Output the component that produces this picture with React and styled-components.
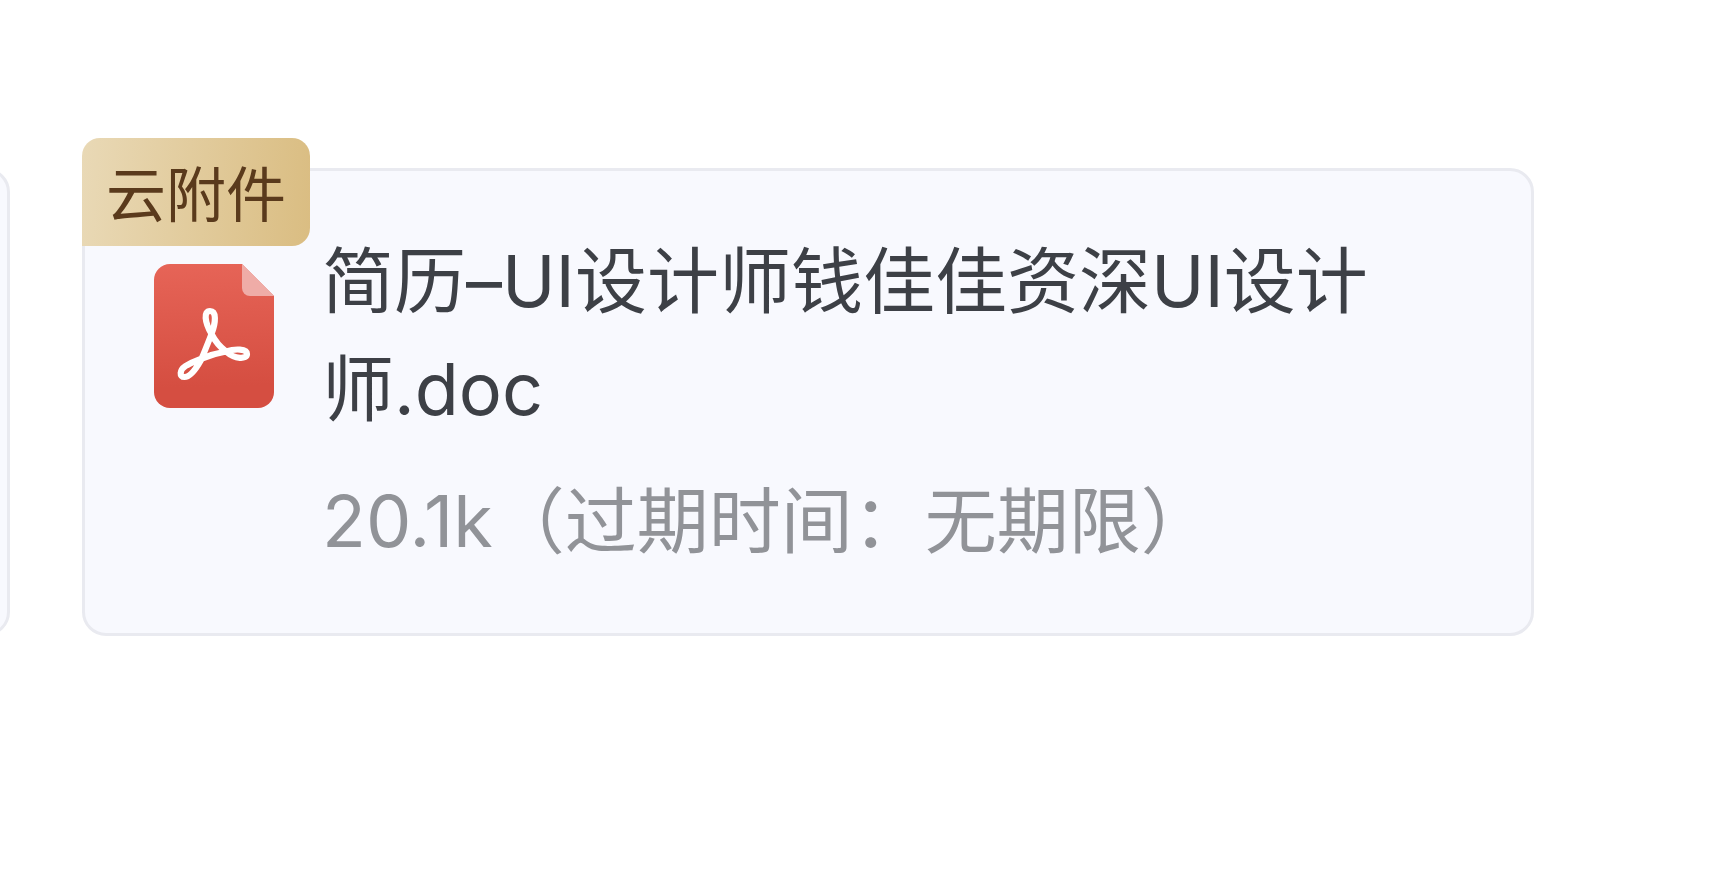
import React from 'react';
import styled, { createGlobalStyle } from 'styled-components';

const GlobalStyle = createGlobalStyle`
  * {
    box-sizing: border-box;
  }

  body {
    margin: 0;
    background: #ffffff;
    font-family: Inter, 'Noto Sans CJK SC', sans-serif;
    font-weight: 400;
  }
`;

const AttachmentStrip = styled.ul`
  display: flex;
  justify-content: flex-end;
  gap: 72px;
  margin: 0;
  padding: 168px 192px 48px 82px;
  list-style: none;
  overflow: hidden;
`;

const Card = styled.li`
  position: relative;
  flex: 0 0 100%;
  display: flex;
  align-items: flex-start;
  gap: 48px;
  padding: 56px 117px 58px 69px;
  border: 3px solid #e9eaf0;
  border-radius: 24px;
  background: #f8f9fe;
`;

const CloudBadge = styled.span`
  position: absolute;
  top: -33px;
  left: -3px;
  padding: 12px 24px 6px;
  border-radius: 18px 18px 18px 0;
  background: linear-gradient(94deg, #e9d9b6 0%, #dabd82 100%);
  color: #5a3a1c;
  font-size: 60px;
  line-height: 90px;
  white-space: nowrap;
`;

const FileIcon = styled.svg`
  flex: none;
  width: 120px;
  height: 144px;
  margin-top: 37px;
`;

const FileInfo = styled.div`
  flex: 1;
  min-width: 0;
  display: flex;
  flex-direction: column;
  gap: 24px;
  font-size: 72px;
  line-height: 108px;
`;

const FileName = styled.div`
  color: #3d4046;
`;

const FileMeta = styled.div`
  color: #919398;
`;

const PdfIcon = () => (
  <FileIcon viewBox="0 0 120 144" fill="none" aria-hidden="true">
    <defs>
      <linearGradient id="pdf-body" x1="58" y1="0" x2="62" y2="144" gradientUnits="userSpaceOnUse">
        <stop offset="0" stopColor="#e66457" />
        <stop offset="0.85" stopColor="#d54e41" />
      </linearGradient>
    </defs>
    <path
      d="M16 0H88L120 32V128A16 16 0 0 1 104 144H16A16 16 0 0 1 0 128V16A16 16 0 0 1 16 0Z"
      fill="url(#pdf-body)"
    />
    <path d="M88 0L120 32H96A8 8 0 0 1 88 24Z" fill="#efaca7" />
    <path
      d="M57.500 70C50.500 58 49.500 47 56 47C62.500 47 62 58 57.500 70C54 79 50.500 88 47 96C42 105 36 113 30.500 113C25 113 25.500 106 31.500 102C37 98.500 42 97 47 95C55 91.500 63 89 72 87.500C81 84.500 93 84.500 93 90C93 95.500 81 95.500 72 87.500C66 83 61 77 57.500 70Z"
      stroke="#ffffff"
      strokeWidth="6.2"
      strokeLinejoin="round"
    />
  </FileIcon>
);

const attachments = [
  { id: 1 },
  {
    id: 2,
    cloud: true,
    name: '简历–UI设计师钱佳佳资深UI设计师.doc',
    meta: '20.1k（过期时间：无期限）'
  }
];

const App = () => (
  <>
    <GlobalStyle />
    <AttachmentStrip>
      {attachments.map(file => (
        <Card key={file.id}>
          {file.cloud && <CloudBadge>云附件</CloudBadge>}
          {file.name && (
            <>
              <PdfIcon />
              <FileInfo>
                <FileName>{file.name}</FileName>
                <FileMeta>{file.meta}</FileMeta>
              </FileInfo>
            </>
          )}
        </Card>
      ))}
    </AttachmentStrip>
  </>
);

export default App;
